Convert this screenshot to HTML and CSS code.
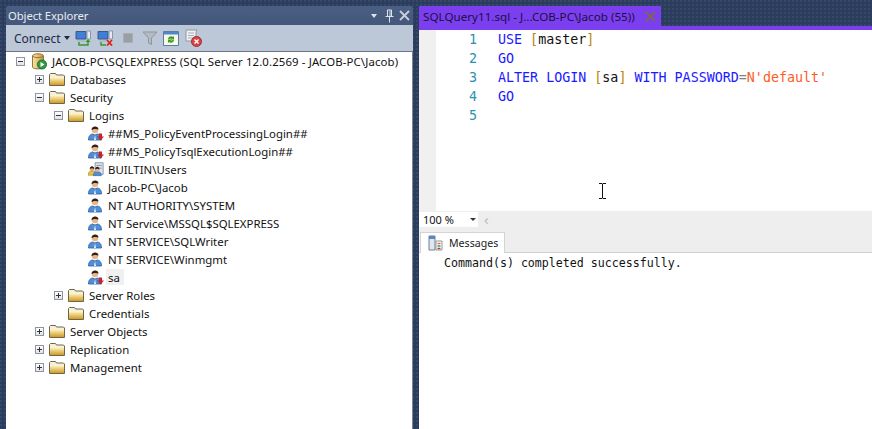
FILE: index.html
```
<!DOCTYPE html>
<html lang="en">
<head>
<meta charset="utf-8">
<title>Object Explorer</title>
<link rel="stylesheet" href="styles.css">
</head>
<body>
<svg class="defs" width="0" height="0" aria-hidden="true">
  <defs>
    <linearGradient id="fold" x1="0" y1="0" x2="0" y2="1"><stop offset="0" stop-color="#fff4bd"/><stop offset="1" stop-color="#d09a26"/></linearGradient>
    <linearGradient id="cyl" x1="0" y1="0" x2="1" y2="0"><stop offset="0" stop-color="#f8e6a6"/><stop offset="1" stop-color="#c9963a"/></linearGradient>
    <symbol id="folder" viewBox="0 0 16 16">
      <path d="M.5 14.500V3.500l1-1h5l1 1.500h7l1 1v9.500z" fill="#f6f1da" stroke="#6e664a"/>
      <path d="M1 6.500h14v7.500H1z" fill="url(#fold)"/>
    </symbol>
    <symbol id="user" viewBox="0 0 16 16">
      <path d="M.5 15c0-4.500 2-5.500 4-6l2.500 1 2.500-1c2 .5 4 1.500 4 6z" fill="#4f8fd8" stroke="#2a5d9f" stroke-width=".8"/>
      <path d="M7 10l-1 5h2z" fill="#e8f0fa"/>
      <circle cx="7" cy="5" r="3.200" fill="#e8b48a"/>
      <path d="M3.500 5.200C3 .5 10.500 0 10.500 4.500c-2-.8-5-1-7 .7z" fill="#2e2018"/>
    </symbol>
    <symbol id="down" viewBox="0 0 16 16">
      <path d="M11 8.500h3v3h2l-3.500 4-3.500-4h2z" fill="#c8232c"/>
    </symbol>
    <symbol id="group" viewBox="0 0 18 16">
      <path d="M8 1h9v13H8z" fill="#dfe6f0" stroke="#7f8ea3"/>
      <path d="M9.500 4h6M9.500 7h6" stroke="#7f8ea3"/>
      <path d="M0 15c0-3 1-4 3-4.500h3c2 .5 3 1.500 3 4.500z" fill="#e8c23a" stroke="#96791c" stroke-width=".6"/>
      <circle cx="4.500" cy="8" r="2.500" fill="#d9a67c"/>
      <path d="M2 8c0-4 5-4 5 0-2-1-3-1-5 0z" fill="#2e2018"/>
      <path d="M6 15.500c0-3 1-4 3-4.500h3c2 .5 3 1.500 3 4.500z" fill="#4f8fd8" stroke="#2a5d9f" stroke-width=".6"/>
      <circle cx="10.500" cy="8.500" r="2.500" fill="#e8b48a"/>
      <path d="M8 8.500c0-4 5-4 5 0-2-1-3-1-5 0z" fill="#2e2018"/>
    </symbol>
  </defs>
</svg>
<div class="desk">
  <section class="explorer">
    <header class="title">
      <span class="title-text">Object Explorer</span>
      <span class="title-btns">
        <i class="tri"></i>
        <svg class="pin" width="9" height="14" viewBox="0 0 9 14"><path d="M2.500 1h4v6.500h-4zM.5 7.500h8M4.500 8v5.500M5 1.500v6" fill="none" stroke="#dfe4ec"/></svg>
        <svg class="x" width="11" height="11" viewBox="0 0 11 11"><path d="M1 1l9 9M10 1l-9 9" stroke="#c9d0dc" stroke-width="1.800"/></svg>
      </span>
    </header>
    <div class="toolbar">
      <span class="connect">Connect<i class="tri dark"></i></span>
      <svg class="tb t1" width="16" height="16" viewBox="0 0 16 16"><path d="M1 1.500h10v7.500H1z" fill="#3f7fd8" stroke="#3b5a86"/><path d="M12 1h3.500v8H12z" fill="#e6eaf0" stroke="#8a97a8"/><path d="M2 10.500h8v1H2z" fill="#9fb0c6"/><path d="M4 12v3h9v-4" fill="none" stroke="#2f9a2f" stroke-width="1.400"/><path d="M10.500 12l2.500-3 2.500 3z" fill="#2f9a2f"/></svg>
      <svg class="tb t2" width="16" height="16" viewBox="0 0 16 16"><path d="M1 1.500h10v7.500H1z" fill="#3f7fd8" stroke="#3b5a86"/><path d="M12 1h3.500v8H12z" fill="#e6eaf0" stroke="#8a97a8"/><path d="M2 10.500h8v1H2z" fill="#9fb0c6"/><path d="M4 12v3h5" fill="none" stroke="#2f9a2f" stroke-width="1.400"/><path d="M10 10l5 5.500M15 10l-5 5.500" stroke="#e02020" stroke-width="1.800"/></svg>
      <svg class="tb t3" width="12" height="12" viewBox="0 0 12 12"><path d="M1.500 1.500h9v9h-9z" fill="#9a9fa6" stroke="#a8adb5"/></svg>
      <svg class="tb t4" width="16" height="16" viewBox="0 0 16 16"><path d="M1 2h14L9.500 8v6.500L6.500 13V8z" fill="#b4bbc4" stroke="#8e959e"/></svg>
      <svg class="tb t5" width="16" height="16" viewBox="0 0 16 16"><path d="M.5 1.500h15v14H.5z" fill="#f6f8e8" stroke="#5a7ca8"/><path d="M1 2h14v2.500H1z" fill="#4f86cf"/><path d="M5 9a3 3 0 0 1 5-2l1-1v3.500H7.500l1-1a2 2 0 0 0-2 .5zM11 10a3 3 0 0 1-5 2l-1 1V9.500h3.500l-1 1a2 2 0 0 0 2-.5z" fill="#3f9a22"/></svg>
      <svg class="tb t6" width="18" height="18" viewBox="0 0 18 18"><path d="M2 1h11l-1 2v9H2z" fill="#f0f1f3" stroke="#9098a3"/><path d="M4 4h6M4 6.500h6M4 9h5" stroke="#a5adb8"/><circle cx="12.500" cy="12.500" r="5" fill="#d9434a" stroke="#a92a30"/><path d="M10.500 10.500l4 4M14.500 10.500l-4 4" stroke="#fff" stroke-width="1.400"/></svg>
    </div>
    <div class="tree">
      <div class="row"><i class="exp minus"></i><svg class="ico root" width="15" height="17" viewBox="0 0 15 17"><path d="M.5 3c0-3 11-3 11 0v11c0 2.500-11 2.500-11 0z" fill="url(#cyl)" stroke="#94773a"/><path d="M1 3.500c2 1.500 8 1.500 10 0" fill="none" stroke="#94773a"/><circle cx="10" cy="11.500" r="4.500" fill="#2f9a3f" stroke="#1f7030"/><path d="M8.500 9l4 2.500-4 2.500z" fill="#fff"/></svg><span class="label wide">JACOB-PC\SQLEXPRESS (SQL Server 12.0.2569 - JACOB-PC\Jacob)</span></div>
      <div class="row l1"><i class="exp plus"></i><svg class="ico"><use href="#folder"/></svg><span class="label">Databases</span></div>
      <div class="row l1"><i class="exp minus"></i><svg class="ico"><use href="#folder"/></svg><span class="label">Security</span></div>
      <div class="row l2"><i class="exp minus"></i><svg class="ico"><use href="#folder"/></svg><span class="label">Logins</span></div>
      <div class="row l3"><i class="exp none"></i><svg class="ico"><use href="#user"/><use href="#down"/></svg><span class="label">##MS_PolicyEventProcessingLogin##</span></div>
      <div class="row l3"><i class="exp none"></i><svg class="ico"><use href="#user"/><use href="#down"/></svg><span class="label">##MS_PolicyTsqlExecutionLogin##</span></div>
      <div class="row l3"><i class="exp none"></i><svg class="ico"><use href="#group"/></svg><span class="label">BUILTIN\Users</span></div>
      <div class="row l3"><i class="exp none"></i><svg class="ico"><use href="#user"/></svg><span class="label">Jacob-PC\Jacob</span></div>
      <div class="row l3"><i class="exp none"></i><svg class="ico"><use href="#user"/></svg><span class="label">NT AUTHORITY\SYSTEM</span></div>
      <div class="row l3"><i class="exp none"></i><svg class="ico"><use href="#user"/></svg><span class="label">NT Service\MSSQL$SQLEXPRESS</span></div>
      <div class="row l3"><i class="exp none"></i><svg class="ico"><use href="#user"/></svg><span class="label">NT SERVICE\SQLWriter</span></div>
      <div class="row l3"><i class="exp none"></i><svg class="ico"><use href="#user"/></svg><span class="label">NT SERVICE\Winmgmt</span></div>
      <div class="row l3"><i class="exp none"></i><svg class="ico"><use href="#user"/><use href="#down"/></svg><span class="label selected">sa</span></div>
      <div class="row l2"><i class="exp plus"></i><svg class="ico"><use href="#folder"/></svg><span class="label">Server Roles</span></div>
      <div class="row l2"><i class="exp none"></i><svg class="ico"><use href="#folder"/></svg><span class="label">Credentials</span></div>
      <div class="row l1"><i class="exp plus"></i><svg class="ico"><use href="#folder"/></svg><span class="label">Server Objects</span></div>
      <div class="row l1"><i class="exp plus"></i><svg class="ico"><use href="#folder"/></svg><span class="label">Replication</span></div>
      <div class="row l1"><i class="exp plus"></i><svg class="ico"><use href="#folder"/></svg><span class="label">Management</span></div>
    </div>
  </section>
  <section class="query">
    <div class="tabstrip">
      <div class="doc-tab">
        <span class="doc-name">SQLQuery11.sql - J...COB-PC\Jacob (55))</span>
        <svg class="doc-x" width="11" height="11" viewBox="0 0 11 11"><path d="M1 1l9 9M10 1l-9 9" stroke="#7b6a4a" stroke-width="1.800"/></svg>
      </div>
    </div>
    <div class="purple"></div>
    <div class="editor">
      <div class="gutter"></div>
      <div class="nums"><div>1</div><div>2</div><div>3</div><div>4</div><div>5</div></div>
      <div class="code">
        <div><b>USE</b> <u>[</u>master<u>]</u></div>
        <div><b>GO</b></div>
        <div><b>ALTER LOGIN</b> <u>[</u>sa<u>]</u> <b>WITH PASSWORD</b><em>=</em><s>N'default'</s></div>
        <div><b>GO</b></div>
      </div>
      <svg class="ibeam" width="9" height="16" viewBox="0 0 9 16"><path d="M1 .5h3l.5.5.5-.5h3M4.500 1v14M1 15.500h3l.5-.5.5.5h3" fill="none" stroke="#111"/></svg>
    </div>
    <div class="zoombar">
      <div class="combo"><span>100 %</span><i class="tri dark small"></i></div>
      <span class="chev">&lsaquo;</span>
    </div>
    <div class="restabs">
      <div class="restab">
        <svg width="15" height="16" viewBox="0 0 15 16"><path d="M1 1h6v14H1z" fill="#dfe6f0" stroke="#6f7f95"/><path d="M1 1h6v3H1z" fill="#5f86c0"/><path d="M8 6h6v9H8z" fill="#fff" stroke="#8a97a8"/><path d="M9.500 8.500h3" stroke="#e0702a" stroke-width="1.500"/><path d="M9.500 11h3" stroke="#3f9a3f" stroke-width="1.500"/><path d="M9.500 13.500h3" stroke="#d03030" stroke-width="1.500"/></svg>
        <span>Messages</span>
      </div>
    </div>
    <div class="output">Command(s) completed successfully.</div>
  </section>
</div>
</body>
</html>
```
FILE: styles.css
```
html, body { margin: 0; padding: 0; height: 100%; overflow: hidden; }
body { background: #2b3c5c; font-family: "Noto Sans", "Open Sans", sans-serif; color: #111; }
.defs { position: absolute; }
.desk {
  display: flex;
  gap: 6px;
  height: 429px;
  padding: 6px 0 0 6px;
  box-sizing: border-box;
  background-color: #2b3c5c;
  background-image: radial-gradient(circle at 1px 1px, #35496c 1px, transparent 1px);
  background-size: 4px 4px;
}
i { display: block; font-style: normal; }

.explorer { width: 407px; flex: none; display: flex; flex-direction: column; }
.title {
  height: 19px;
  background: linear-gradient(#4a5f83, #43577a);
  display: flex;
  align-items: center;
  justify-content: space-between;
  padding: 0 3px 0 2px;
  color: #e8ecf2;
  font-size: 11.3px;
  border-radius: 2px 2px 0 0;
}
.title-text { letter-spacing: -.1px; }
.title-btns { display: flex; align-items: center; }
.tri { width: 0; height: 0; border: 3.5px solid transparent; border-top: 4px solid #dfe4ec; border-bottom: 0; }
.tri.dark { border-top-color: #1e2a3a; }
.tri.small { border-width: 3px 3px 0; border-top-color: #333; }
.pin { margin: 0 5px 0 8px; }
.toolbar {
  background: #bcc7d8;
  display: flex;
  align-items: center;
  padding-left: 8px;
  border-bottom: 1px solid #6f7682;
  box-sizing: border-box;
  height: 27px;
}
.connect { display: flex; align-items: center; gap: 3px; color: #1e2a44; font-size: 12px; width: 61px; }
.tb { flex: none; }
.t2 { margin-left: 6px; }
.t3 { margin-left: 9px; }
.t4 { margin-left: 8px; }
.t5 { margin-left: 5px; }
.t6 { margin-left: 5px; }

.tree { flex: 1; background: #fff; padding-left: 10px; border-right: 1px solid #7d838d; overflow: hidden; }
.row { height: 18px; display: flex; align-items: center; font-size: 11.4px; white-space: nowrap; }
.l1 { margin-left: 19px; }
.l2 { margin-left: 38px; }
.l3 { margin-left: 57px; }
.exp {
  width: 9px; height: 9px; box-sizing: border-box; flex: none;
  border: 1px solid #8e95a0;
  background: linear-gradient(#fff, #dfe2e8);
  position: relative;
  margin-right: 5px;
}
.exp.none { visibility: hidden; }
.exp::before { content: ""; position: absolute; left: 1px; top: 3px; width: 5px; height: 1px; background: #333; }
.exp.plus::after { content: ""; position: absolute; left: 3px; top: 1px; width: 1px; height: 5px; background: #333; }
.ico { width: 16px; height: 16px; flex: none; margin-right: 5px; }
.ico.root { width: 15px; height: 17px; margin: 0 5px 0 2px; }
.l3 .ico { margin-left: 1px; margin-right: 4px; }
.label { padding: 1px 2px 0 0; line-height: 15px; }
.wide { letter-spacing: .12px; }
.selected { background: #f0f0f0; padding: 1px 4px 0 2px; margin-left: -2px; }

.query { flex: 1; min-width: 0; display: flex; flex-direction: column; }
.tabstrip { height: 20px; display: flex; }
.doc-tab {
  width: 242px; box-sizing: border-box;
  background: #7c3ff0;
  display: flex; align-items: center; justify-content: space-between;
  padding: 0 5px 0 4px;
  color: #1a0f3c;
  font-size: 11.67px;
  white-space: nowrap;
}
.purple { height: 4px; background: #7c3ff0; }
.editor {
  height: 181px; position: relative; background: #fff;
  display: flex;
  font-family: "DejaVu Sans Mono", "Liberation Mono", monospace;
  font-size: 13.33px; line-height: 19px;
}
.gutter { width: 17px; background: #f0f0f0; flex: none; }
.nums { width: 41px; text-align: right; color: #2b91af; flex: none; }
.code { margin-left: 21px; color: #111; }
.code div { white-space: pre; }
.code b { font-weight: normal; color: #1a1aff; }
.code u { text-decoration: none; color: #b8860b; }
.code em { font-style: normal; color: #808080; }
.code s { text-decoration: none; color: #ff5a1f; }
.ibeam { position: absolute; left: 179px; top: 153px; }
.zoombar { height: 16px; background: #eeeeee; display: flex; align-items: center; font-size: 11px; }
.combo { width: 59px; height: 15px; box-sizing: border-box; background: #fff; display: flex; align-items: center; justify-content: space-between; padding: 0 2px 0 4px; }
.chev { margin-left: 6px; color: #bbb; font-size: 15px; line-height: 15px; }
.restabs { height: 26px; background: #eeeeee; border-bottom: 1px solid #cfcfcf; box-sizing: border-box; display: flex; align-items: flex-end; padding-left: 1px; }
.restab { width: 85px; height: 21px; box-sizing: border-box; background: #fff; border: 1px solid #d4d4d4; border-bottom: 0; display: flex; align-items: center; gap: 6px; padding-left: 7px; font-size: 10.6px; margin-bottom: -1px; color: #222; }
.output { flex: 1; background: #fff; padding: 2px 0 0 25px; font-family: "DejaVu Sans Mono", "Liberation Mono", monospace; font-size: 11.62px; line-height: 16px; color: #111; }
```
